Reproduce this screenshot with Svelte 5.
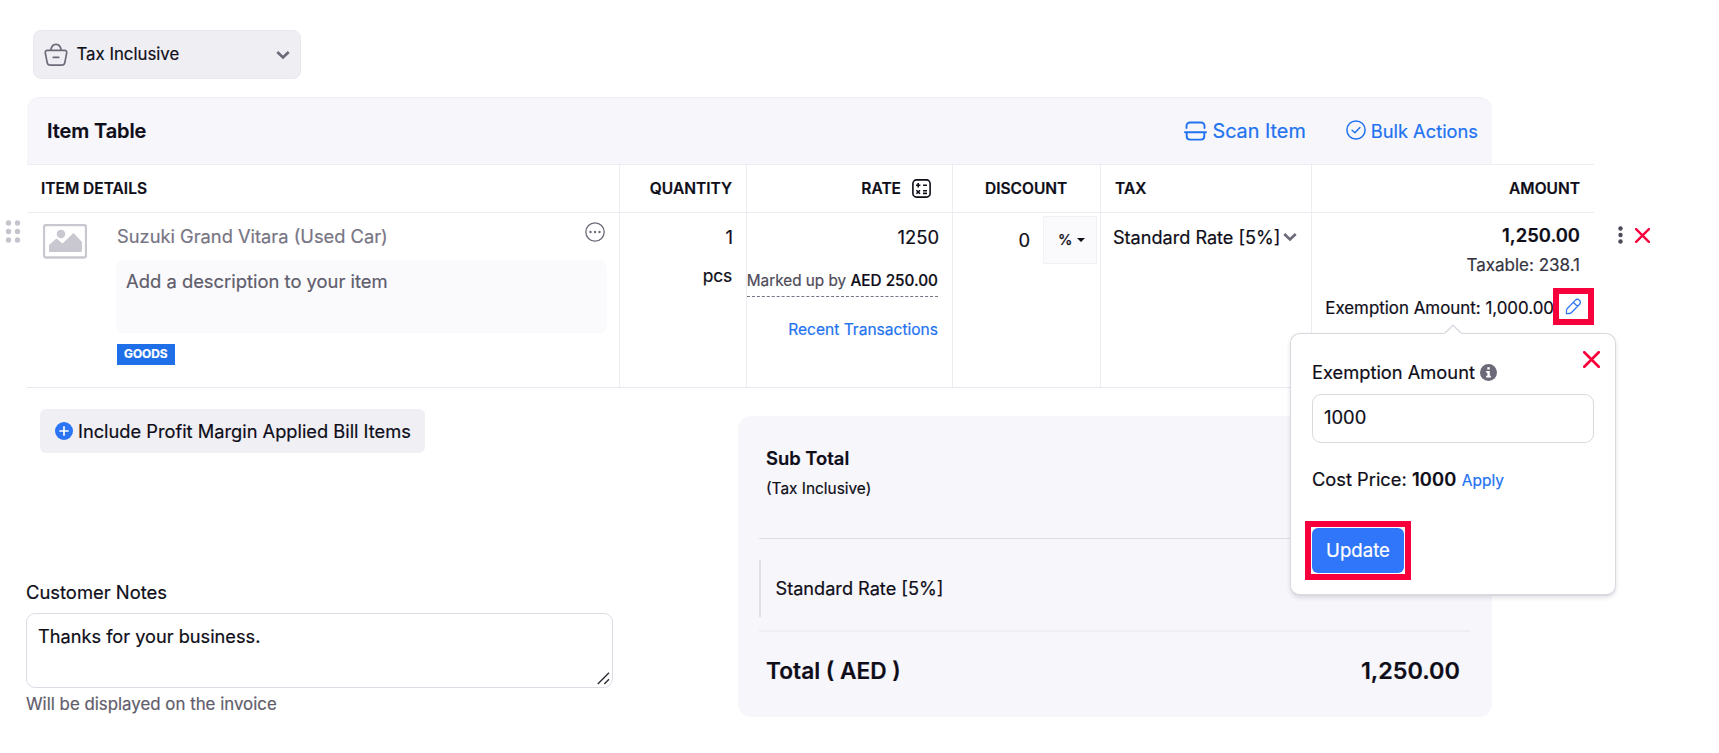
<script>
  const columns = ['QUANTITY', 'RATE', 'DISCOUNT', 'TAX', 'AMOUNT'];
  const dots = [3, 11.5, 20];
</script>

{#snippet chevron()}
  <svg class="chevron" width="14" height="10" viewBox="0 0 14 10"><path d="M1.3 2l5.7 5.4L12.7 2" fill="none" stroke="#6c6a79" stroke-width="2.7" /></svg>
{/snippet}

{#snippet cross(size)}
  <svg width={size} height={size} viewBox="0 0 16 16"><path d="M1.2 1.2l13.6 13.6M14.8 1.2L1.2 14.8" stroke="#f8003c" stroke-width="2.5" stroke-linecap="round" /></svg>
{/snippet}

<main>
  <div class="select">
    <svg width="24" height="24" viewBox="0 0 24 24" fill="none" stroke="#6c6a79" stroke-width="1.7" stroke-linecap="round" stroke-linejoin="round">
      <path d="M3.4 7.300h17.200a2.100 2.100 0 0 1 2.100 2.500l-1.900 9.800a3.300 3.300 0 0 1-3.300 2.600h-11a3.300 3.300 0 0 1-3.300-2.600L1.300 9.800a2.100 2.100 0 0 1 2.100-2.500z" />
      <path d="M6.800 7C7.400 3.400 9.400 1.300 12 1.300s4.600 2.100 5.200 5.700M9.200 14.300h5.600" />
    </svg>
    <span>Tax Inclusive</span>
    {@render chevron()}
  </div>

  <header class="toolbar">
    <h2>Item Table</h2>
    <a class="scan" href="#scan">
      <svg width="23" height="20" viewBox="0 0 23 20" fill="none" stroke="#2172f0" stroke-width="1.900" stroke-linecap="round">
        <path d="M2.500 7V5a3.500 3.500 0 0 1 3.500-3.500h11A3.500 3.500 0 0 1 20.500 5v2M1 11.300h21M2.700 12v3.400A3.300 3.300 0 0 0 6 18.600h11a3.300 3.300 0 0 0 3.300-3.200V12" />
      </svg>
      <span>Scan Item</span>
    </a>
    <a class="bulk" href="#bulk">
      <svg width="20" height="20" viewBox="0 0 20 20" fill="none" stroke="#2172f0" stroke-width="1.500" stroke-linecap="round" stroke-linejoin="round">
        <circle cx="10" cy="10" r="9.100" /><path d="M6.100 10.300l2.800 2.500 5-5.200" />
      </svg>
      <span>Bulk Actions</span>
    </a>
  </header>

  <div class="grid head">
    <div class="cell">ITEM DETAILS</div>
    {#each columns as name}
      <div class="cell {name.toLowerCase()}">
        {name}
        {#if name === 'RATE'}
          <svg width="19" height="19" viewBox="0 0 19 19" fill="none" stroke="#0e0d18">
            <rect x=".9" y=".9" width="17.200" height="17.200" rx="3.600" stroke-width="1.600" />
            <path d="M4 6.200h4.400M6.200 4v4.400M11 6.200h4M4.400 11.200l3.600 3.600M8 11.200l-3.600 3.600M11 11.700h4M11 14.400h4" stroke-width="1.600" />
          </svg>
        {/if}
      </div>
    {/each}
  </div>

  <div class="line">
    <svg class="drag" width="27" height="24" viewBox="0 0 27 24" fill="#c5c4cc">
      {#each dots as y}
        <circle cx="8.500" cy={y} r="2.700" /><circle cx="17.500" cy={y} r="2.700" />
      {/each}
    </svg>

    <div class="grid body">
      <div class="cell item">
        <svg class="photo" width="44" height="35" viewBox="0 0 44 35">
          <rect x="1" y="1" width="42" height="32.500" rx="2" fill="#fff" stroke="#c9c8d0" stroke-width="2.300" />
          <circle cx="18" cy="10" r="4.300" fill="#c9c8d0" />
          <path d="M6 27.500V21l7.500-6.500 6 5L30.500 9 39 18v8.500q0 1.500-1.500 1.500h-30Q6 28 6 27.500z" fill="#c9c8d0" />
        </svg>
        <div class="info">
          <div class="name">
            <span>Suzuki Grand Vitara (Used Car)</span>
            <svg width="20" height="20" viewBox="0 0 20 20"><circle cx="10" cy="10" r="9.200" fill="none" stroke="#6c6a79" stroke-width="1.300" /><g fill="#6c6a79"><circle cx="5.500" cy="10" r="1.200" /><circle cx="10" cy="10" r="1.200" /><circle cx="14.500" cy="10" r="1.200" /></g></svg>
          </div>
          <div class="description">Add a description to your item</div>
          <span class="badge">GOODS</span>
        </div>
      </div>

      <div class="cell qty"><div>1</div><div class="unit">pcs</div></div>

      <div class="cell price">
        <div class="unit-price">1250</div>
        <div class="markup">Marked up by <b>AED 250.00</b></div>
        <a href="#recent">Recent Transactions</a>
      </div>

      <div class="cell disc">
        <span>0</span>
        <div class="percent">%<i></i></div>
      </div>

      <div class="cell rate-tax"><span>Standard Rate [5%]</span>{@render chevron()}</div>

      <div class="cell sum">
        <strong>1,250.00</strong>
        <div class="taxable">Taxable: 238.1</div>
        <div class="exempt">
          <span>Exemption Amount: 1,000.00</span>
          <div class="mark pencil">
            <svg width="17" height="17" viewBox="0 0 17 17" fill="none" stroke="#2f78f2" stroke-width="1.300" stroke-linejoin="round"><path d="M2.100 10.700l8.300-8.600a2.600 2.600 0 0 1 3.800 0l.4.400a2.600 2.600 0 0 1 0 3.700L6.300 14.700Q5.300 15.700 1.400 15.700 1.200 11.800 2.100 10.700zM8.300 4.300l4.300 4.200" /></svg>
          </div>

          <div class="popover">
            <svg class="arrow" width="18" height="10" viewBox="0 0 18 10"><path d="M0 10L1.500 9 9 1.200 16.500 9l1.500 1z" fill="#fff" /><path d="M1 9L9 1.200 17 9" fill="none" stroke="#dad9e0" stroke-width="1.400" /></svg>
            <div class="close">{@render cross(17)}</div>
            <div class="label">
              Exemption Amount
              <svg width="17" height="17" viewBox="0 0 17 17"><circle cx="8.500" cy="8.500" r="8.500" fill="#6c6a79" /><path d="M6.200 7.100h3.600v4.700h1.100v1.700H6.200v-1.700h1.200V8.800H6.200zM7.300 3.300h2.500v2.300H7.300z" fill="#fff" /></svg>
            </div>
            <div class="input">1000</div>
            <div class="cost">Cost Price: <b>1000</b> <a href="#apply">Apply</a></div>
            <div class="mark update"><button>Update</button></div>
          </div>
        </div>
      </div>
    </div>

    <div class="actions">
      <svg width="5" height="18" viewBox="0 0 5 18" fill="#4d4b59"><circle cx="2.500" cy="2.500" r="2.200" /><circle cx="2.500" cy="9" r="2.200" /><circle cx="2.500" cy="15.500" r="2.200" /></svg>
      {@render cross(15)}
    </div>
  </div>

  <section class="lower">
    <div class="left">
      <button class="include">
        <svg width="18" height="18" viewBox="0 0 18 18"><circle cx="9" cy="9" r="9" fill="#2a74f5" /><path d="M9 4.300v9.400M4.300 9h9.400" stroke="#fff" stroke-width="1.700" /></svg>
        Include Profit Margin Applied Bill Items
      </button>
      <div class="caption">Customer Notes</div>
      <div class="notes">
        Thanks for your business.
        <svg width="13" height="13" viewBox="0 0 13 13"><path d="M.8 12L12 .8M7.300 12L12 7.300" stroke="#2b2a35" stroke-width="1.400" /></svg>
      </div>
      <div class="hint">Will be displayed on the invoice</div>
    </div>

    <div class="totals">
      <div class="subtotal">Sub Total</div>
      <div class="inclusive">(Tax Inclusive)</div>
      <div class="tax-row">Standard Rate [5%]</div>
      <div class="total"><span>Total ( AED )</span><span class="value">1,250.00</span></div>
    </div>
  </section>
</main>

<style>
  :global(body) { background: #fff; }
  main { box-sizing: border-box; height: 753px; overflow: hidden; padding-top: 30px; font: 400 18.4px/24px Inter, sans-serif; color: #0e0d18; white-space: nowrap; -webkit-text-stroke: 0.2px; }
  main :global(*) { box-sizing: border-box; }
  svg { display: block; flex: none; }
  a { color: #2172f0; text-decoration: none; }
  button { font: inherit; border: 0; }

  .select { display: flex; align-items: center; width: 268px; height: 49px; margin: 0 0 18px 33px; padding: 0 10px 0 10px; background: #efeef3; border: 1px solid #e9e8ee; border-radius: 8px; font-size: 16.8px; }
  .select span { margin: -1px 0 0 8.5px; }
  .select .chevron { margin-left: auto; }

  .toolbar { display: flex; align-items: center; width: 1465px; height: 67px; margin-left: 27px; padding: 0 14px 0 20px; background: #f7f6fb; border-top: 1px solid #f0eff5; border-radius: 13px 13px 0 0; }
  h2 { margin: 0 auto 0 0; font-size: 20px; font-weight: 600; letter-spacing: -0.1px; }
  .toolbar a { display: flex; align-items: center; }
  .scan { gap: 5px; font-size: 19.8px; }
  .bulk { gap: 5px; margin-left: 40px; font-size: 18.3px; }
  .bulk svg { margin-top: -2px; }

  .grid { display: grid; grid-template-columns: 593px 127px 206px 148px 211px 282px; width: 1567px; }
  .cell { border-right: 1px solid #edecf3; }
  .cell:last-child { border-right: 0; }
  .head { height: 49px; margin-left: 27px; border: solid #edecf3; border-width: 1px 0; font-size: 15.5px; font-weight: 600; }
  .head .cell { display: flex; align-items: center; padding: 0 14px; }
  .head .quantity, .head .amount { justify-content: flex-end; }
  .head .rate { justify-content: flex-end; gap: 11px; padding-right: 21px; }
  .head .discount { padding-left: 32px; }

  .line { display: flex; height: 175px; }
  .drag { margin-top: 7px; }
  .body { border-bottom: 1px solid #e9e8f0; }
  .item { display: flex; padding: 11px 12px 0 16px; }
  .info { flex: 1; margin-left: 29px; }
  .name { display: flex; justify-content: space-between; padding: 0 2px 0 1px; font-size: 18.3px; color: #777584; }
  .name svg { margin-top: -2px; }
  .description { height: 73px; margin: 12px 0 11px; padding: 9px 10px; border-radius: 7px; background: #fafafd; color: #5f5d6b; }
  .badge { display: flex; align-items: center; width: 58px; height: 21px; margin-left: 1px; padding: 0 0 1px 7px; background: #1f6fe8; color: #fff; font-size: 11.9px; font-weight: 700; }
  .qty { padding: 12px 13px 0 0; text-align: right; }
  .unit { margin-top: 15px; padding-right: 1px; font-size: 17.4px; letter-spacing: -0.2px; }
  .price { display: flex; flex-direction: column; align-items: flex-end; padding: 12px 14px 0 0; }
  .unit-price { margin-right: -1px; }
  .markup { margin: 20px 0; padding-bottom: 3px; border-bottom: 1px dashed #777584; font-size: 15.3px; color: #4d4b59; }
  .markup b { font-weight: 500; color: #0e0d18; }
  .price a { padding-top: 1px; font-size: 15.55px; }
  .disc { display: flex; justify-content: flex-end; align-items: center; gap: 13px; height: 51px; padding: 3px 4px 0 0; border-right: 0; }
  .percent { display: flex; align-items: center; gap: 5px; width: 54px; height: 48px; padding-left: 14px; background: #fafafd; border: 1px solid #f2f1f6; font-size: 14.5px; font-weight: 500; }
  .percent i { border: 4px solid transparent; border-top-color: #0e0d18; border-bottom: 0; }
  .rate-tax { display: flex; margin-left: -1px; padding: 12px 14px 0 12px; border-left: 1px solid #edecf3; font-size: 18.1px; }
  .rate-tax .chevron { margin: 7px 0 0 auto; }
  .sum { padding: 10px 14px 0 0; text-align: right; }
  .sum strong { display: block; font-weight: 600; }
  .taxable { margin: 6px 0 11px; font-size: 17px; color: #353441; }
  .exempt { position: relative; display: flex; justify-content: flex-end; align-items: center; margin-right: -14px; font-size: 16.9px; }
  .exempt > span { margin-right: -1px; padding-top: 2px; }
  .mark { border: 6px solid #f8003c; }
  .pencil { display: flex; align-items: center; justify-content: center; width: 41px; height: 37px; background: #fff; }

  .popover { position: absolute; z-index: 2; right: -22px; top: 45px; width: 326px; height: 263px; padding: 26px 21px 0; background: #fff; border: 1.500px solid #dad9e0; border-bottom-width: 2px; border-radius: 10px; box-shadow: 0 2px 4px rgba(50, 48, 70, 0.14); text-align: left; font-size: 18.3px; }
  .arrow { position: absolute; left: 153px; top: -10px; }
  .close { position: absolute; right: 15px; top: 17px; }
  .label { display: flex; align-items: center; gap: 5px; }
  .input { height: 49px; margin: 10px 0 24px; padding: 10px 11px; border: 1.500px solid #dad9e0; border-radius: 9px; font-size: 18.4px; }
  .cost b { font-weight: 600; letter-spacing: 0.2px; }
  .cost a { font-size: 15.5px; }
  .update { width: 106px; height: 59px; margin: 28px 0 0 -7px; background: #fff; }
  .update button { display: block; width: 92px; height: 45px; margin: 1px; padding: 0; border-radius: 6px; background: #3076fa; color: #fff; font-size: 18.6px; line-height: 45px; }

  .actions { display: flex; align-items: center; height: 18px; margin: 13px 0 0 23.500px; gap: 12px; }

  .lower { display: flex; }
  .left { width: 738px; padding: 21px 0 0 26px; }
  .include { display: flex; align-items: center; gap: 5px; width: 385px; height: 44px; margin-left: 14px; padding: 0 0 0 15px; border-radius: 6px; background: #f0eff4; color: #0e0d18; font-size: 18.25px; -webkit-text-stroke: inherit; }
  .caption { margin: 127px 0 9px; }
  .notes { display: flex; justify-content: space-between; align-items: flex-start; width: 587px; height: 75px; padding: 10px 2px 2px 11px; border: 1.500px solid #dddce5; border-radius: 9px; font-size: 18.2px; }
  .notes svg { align-self: flex-end; }
  .hint { margin-top: 4px; font-size: 16.85px; color: #5f5d6b; }

  .totals { width: 754px; height: 301px; margin-top: 28px; padding: 30px 22px 0 21px; border-radius: 13px; background: #f7f6fb; }
  .subtotal { padding-left: 7px; font-weight: 600; }
  .inclusive { padding: 7px 0 37px 7px; font-size: 15.4px; }
  .tax-row { position: relative; height: 94px; padding: 37px 0 0 16.500px; border-top: 1px solid #dfdee4; border-bottom: 2px solid #efeef3; font-size: 18.15px; }
  .tax-row::before { content: ''; position: absolute; left: 0; top: 21px; width: 2px; height: 57px; background: #e1e0e6; }
  .total { display: flex; justify-content: space-between; padding: 24px 10px 0 7px; font-size: 22.7px; font-weight: 600; line-height: 30px; }
  .value { font-size: 23.4px; }
</style>
